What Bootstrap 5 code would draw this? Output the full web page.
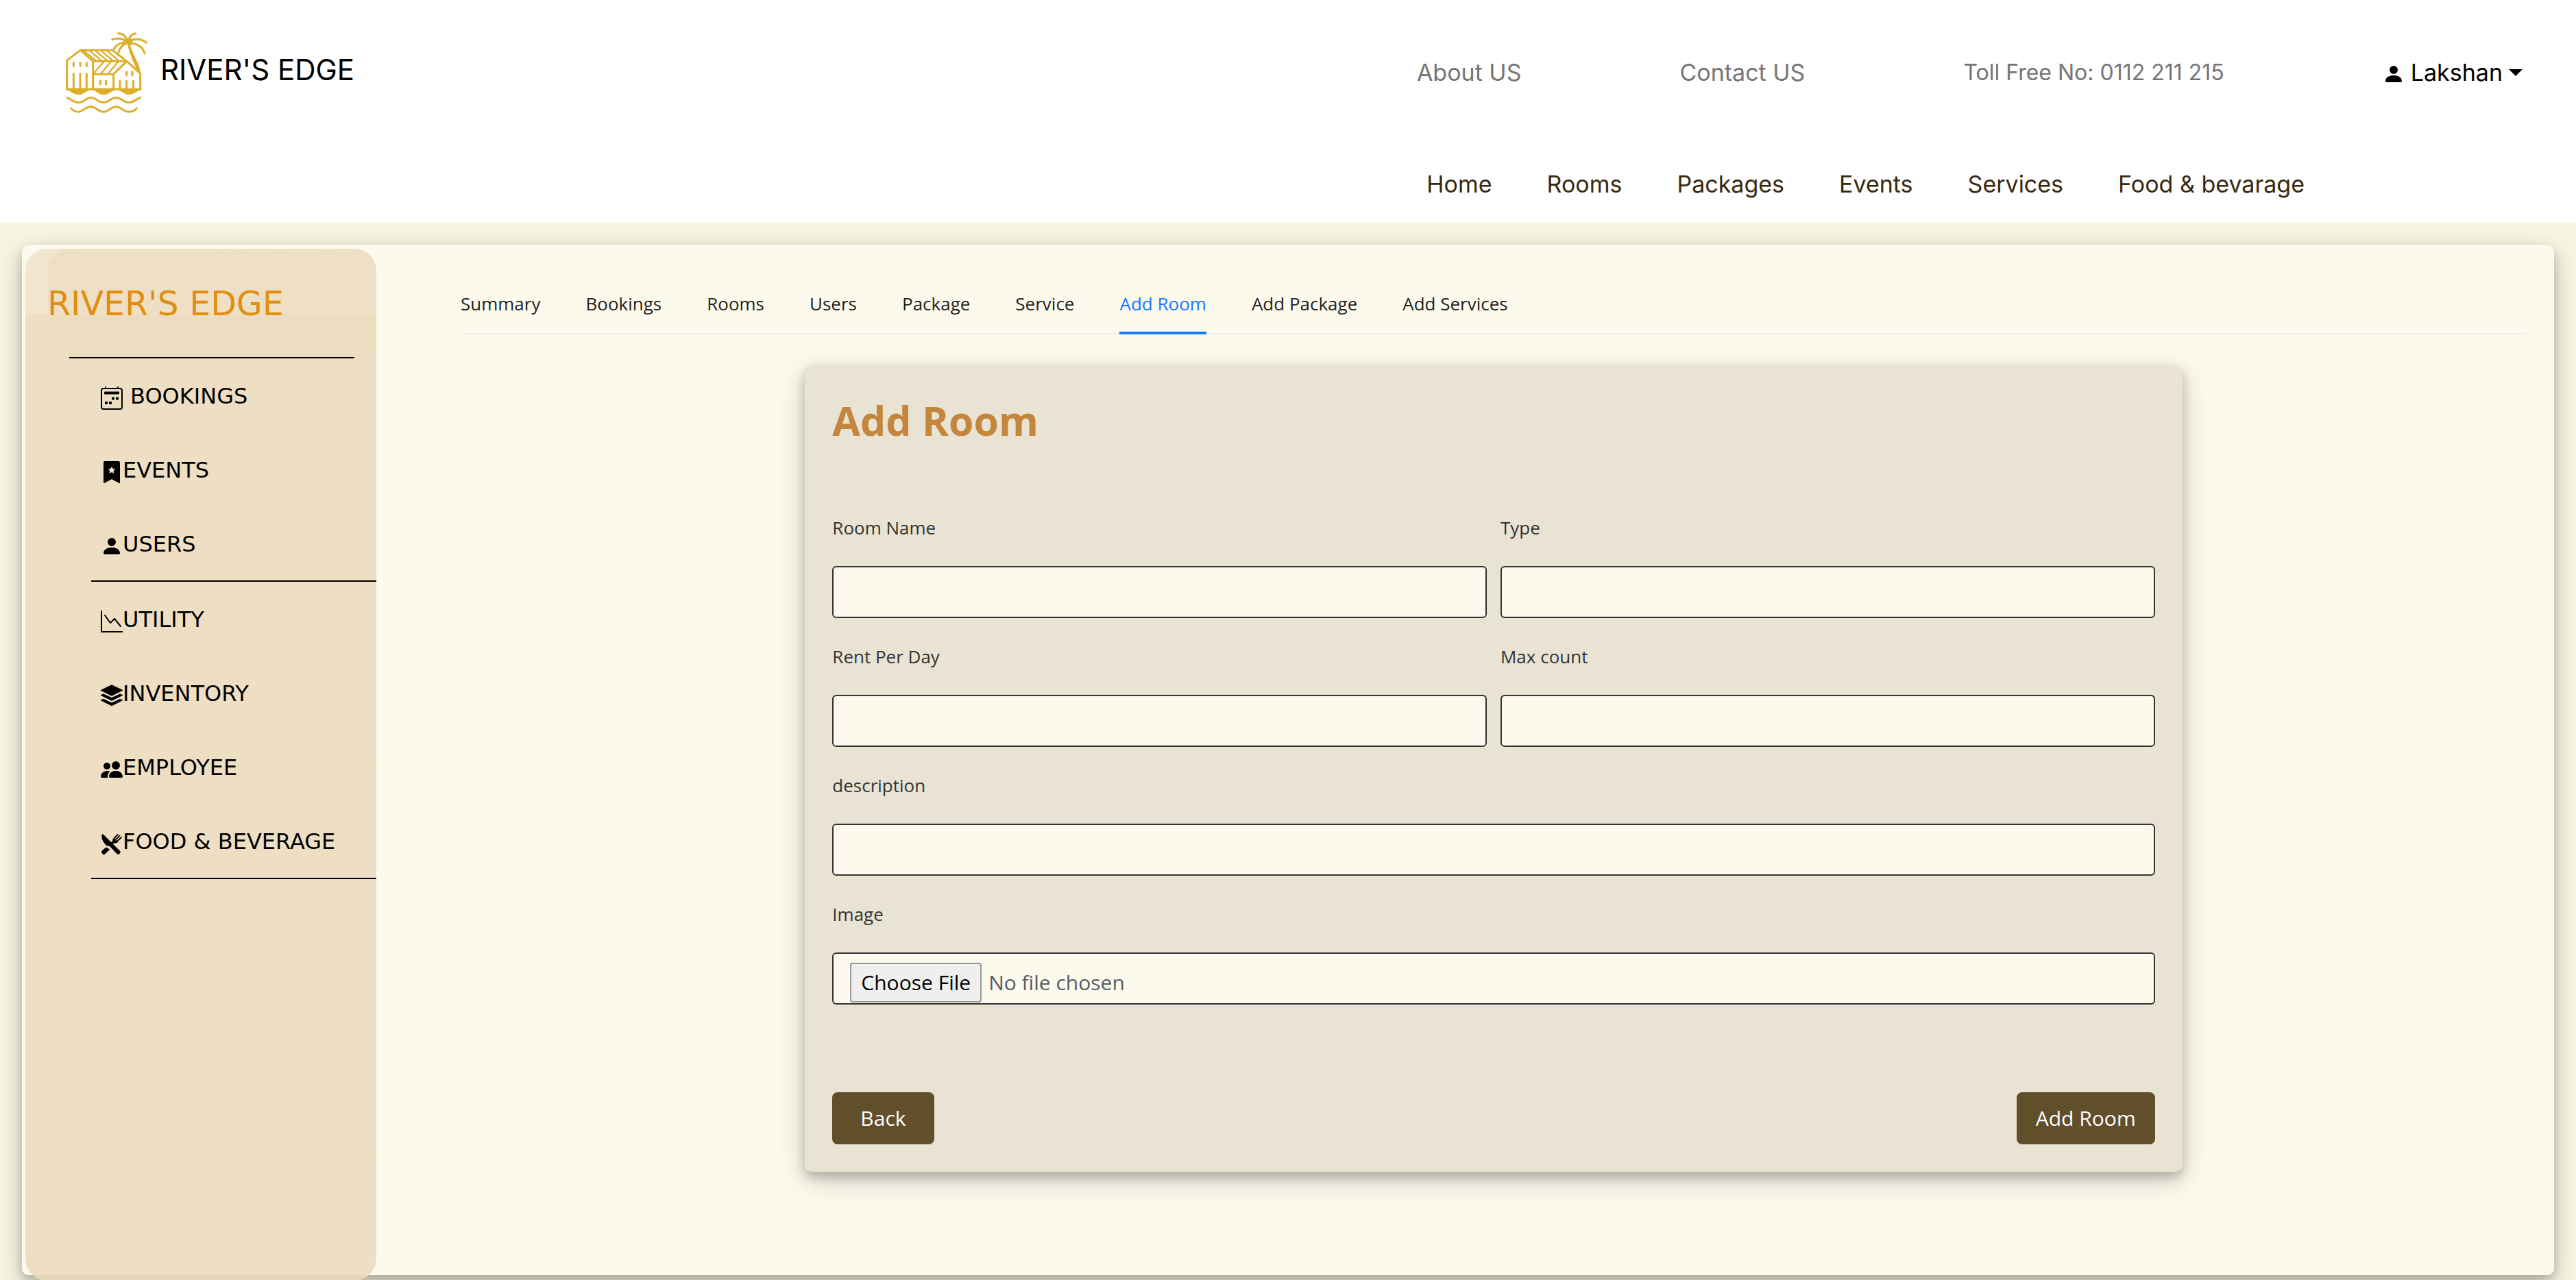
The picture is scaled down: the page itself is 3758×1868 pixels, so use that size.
<!DOCTYPE html>
<html lang="en">
<head>
<meta charset="utf-8">
<meta name="viewport" content="width=device-width, initial-scale=1">
<title>River's Edge - Add Room</title>
<link rel="stylesheet" href="https://cdn.jsdelivr.net/npm/bootstrap@5.3.0/dist/css/bootstrap.min.css">
<style>
  body { background: #f8f5e1; font-family: "Open Sans", "Noto Sans", sans-serif; font-size: 32px; line-height: 48px; color: #212529; min-height: 100vh; overflow: hidden; }
  a { text-decoration: none; }
  .site-header { font-family: "Inter", sans-serif; font-size: 34px; }
  .top-row { height: 212px; padding: 0 78px 0 96px; }
  .menu-row { height: 113px; padding: 0 396px 0 0; gap: 80px; }
  .brand-link { gap: 19px; }
  .brand-name { font-size: 42px; color: #000; padding-bottom: 8px; }
  .top-links { gap: 231px; }
  .top-links a { color: #757575; }
  .top-links .phone { font-size: 32px; }
  .menu-row a { color: #38290f; }
  .user-toggle { font-size: 34px; line-height: 48px; color: #000; gap: 9px; }
  .user-toggle svg { margin-top: 3px; }
  .user-toggle::after { border-width: 10px 10px 0; margin: 0; }
  .workspace { padding: 32px 32px 7px; }
  .panel { background: #fcfaed; border-radius: 10px; padding: 6px 40px 0 5px; gap: 123px; }
  .lifted { box-shadow: 0 8px 16px rgba(0,0,0,.2), 0 12px 40px rgba(0,0,0,.19); }
  .side { width: 512px; margin-bottom: -8px; border-radius: 32px; font-family: "DejaVu Sans", sans-serif;
    background: linear-gradient(rgba(236,219,190,.66) 96px, rgba(236,219,190,.88) 96px); }
  .side-head { margin-left: 32px; height: 160px; border-radius: 32px; background: rgba(236,219,190,.65); padding: 4px 32px 0 0; }
  .side-title { font-size: 49px; line-height: 154px; color: #e18f10; }
  .side-rule { height: 2px; background: #000; margin-left: 32px; }
  .side-list { padding-left: 96px; }
  .side-group { border-bottom: 2px solid #000; }
  .side-link { height: 108px; padding: 2px 0 0 14px; color: #000; font-size: 32px; }
  .side-link svg { margin-top: 6px; }
  .side-link.spaced { gap: 11px; }
  .tab-bar { padding-top: 58px; gap: 66px; border-bottom: 2px solid #f0f0f0; font-size: 26px; line-height: 44px; }
  .tab-bar .nav-link { color: #1f1f1f; padding: 0 0 19px; border-bottom: 4px solid transparent; margin-bottom: -2px; }
  .tab-bar .nav-link.active { color: #1677ff; border-color: #1677ff; }
  .room-card { background: #e9e3d3; border-radius: 10px; margin-top: 45px; padding: 40px; }
  .room-card h1 { font-size: 59px; line-height: 80px; font-weight: 700; color: #c4863c; margin-bottom: 95px; }
  .room-card label { font-size: 26px; line-height: 44px; color: #333; margin-bottom: 34px; }
  .room-card .row { --bs-gutter-x: 20px; }
  .field { margin-bottom: 34px; }
  .room-card .form-control { height: 76px; background: #fcfaed; border: 2px solid #333; border-radius: 6px; font-size: 30px; line-height: 48px; padding: 13px 24px; }
  .room-card .form-control[type=file] { color: #555c66; }
  .room-card .form-control::file-selector-button { margin: 0 10px 0 0; padding: 3px 14px; border: 2px solid #999; border-radius: 4px; background: #efefef; color: #000; }
  .room-card .actions { margin-top: 128px; }
  .btn-brown { height: 76px; background: #614e2a; color: #fff; font-size: 30px; line-height: 48px; border: 0; border-radius: 8px; padding: 0 28px; }
  .btn-back { padding: 0 41px; }
</style>
</head>
<body class="d-flex flex-column">
<header class="site-header bg-white">
  <div class="top-row d-flex align-items-center justify-content-between">
    <a href="#" class="brand-link d-flex align-items-center">
      <svg width="119" height="118" viewBox="108 82 357 353" fill="none" stroke="#dcae2c" stroke-width="9" stroke-linecap="round" stroke-linejoin="round" aria-hidden="true">
        <path d="M113 331V205L172 160H312L373 207L434 262V331M172 160L227 208V331M113 331H434M227 208H373M227 265H317M317 331V265L373 210"/>
        <path stroke-width="7" d="M188 163l50 42M213 163l50 42M238 163l50 42M263 163l50 42M288 163l50 42M273 211l-42 50M305 211l-42 50M337 211l-42 50"/>
        <g stroke-linecap="butt"><path d="M142 212v22M171 212v22M199 212v22M142 261v68M171 261v68M199 261v68M259 291v22M284 291v22M374 252v22M399 252v22M345 292v38M374 292v38M403 292v38"/></g>
        <path fill="#dcae2c" stroke="none" d="M108 328H439V336C420 335 408 355 385 355S350 335 330 335S300 355 273 355S243 335 220 335S190 355 163 355S130 335 108 336Z"/>
        <path d="M114 368C132 373 138 389 163 389S195 368 218 368S249 389 273 389S305 368 328 368S360 389 385 389S415 373 434 368M131 415C139 425 147 430 163 430S195 408 218 408S249 430 273 430S305 408 328 408S360 430 385 430C402 430 411 425 418 415"/>
        <path d="M380 125C372 96 353 87 337 87M380 122C388 98 400 89 412 87M378 122C352 106 326 107 311 114M382 122C408 106 441 111 460 127M376 126C345 126 323 140 317 160M378 128C354 136 342 152 337 176M384 128C417 131 446 143 453 175"/>
        <path fill="#dcae2c" stroke-width="5" d="M360 115L400 112L395 135L368 132ZM380 133C391 184 410 220 418 238L432 252C423 210 397 178 386 133Z"/>
      </svg>
      <span class="brand-name">RIVER'S EDGE</span>
    </a>
    <nav class="top-links d-flex align-items-center">
      <a href="#">About US</a>
      <a href="#">Contact US</a>
      <a href="#" class="phone">Toll Free No: 0112 211 215</a>
      <button type="button" class="user-toggle btn p-0 border-0 d-flex align-items-center dropdown-toggle">
        <svg width="32" height="32" viewBox="0 0 16 16" fill="currentColor" aria-hidden="true"><path d="M3 14s-1 0-1-1 1-4 6-4 6 3 6 4-1 1-1 1H3zm5-6a3 3 0 1 0 0-6 3 3 0 0 0 0 6z"/></svg>
        Lakshan
      </button>
    </nav>
  </div>
  <nav class="menu-row d-flex align-items-center justify-content-end">
    <a href="#">Home</a>
    <a href="#">Rooms</a>
    <a href="#">Packages</a>
    <a href="#">Events</a>
    <a href="#">Services</a>
    <a href="#">Food &amp; bevarage</a>
  </nav>
</header>

<main class="workspace flex-grow-1 d-flex">
  <div class="panel lifted flex-grow-1 d-flex">
    <aside class="side flex-shrink-0">
      <div class="side-head">
        <div class="side-title">RIVER'S EDGE</div>
        <div class="side-rule"></div>
      </div>
      <nav class="side-list">
        <div class="side-group">
          <a href="#" class="side-link spaced d-flex align-items-center">
            <svg width="32" height="34" viewBox="0 0 16 17" fill="currentColor" aria-hidden="true"><path fill-rule="evenodd" d="M3.5 0a.5.5 0 0 1 .5.5V1h8V.5a.5.5 0 0 1 1 0V1h1a2 2 0 0 1 2 2v12a2 2 0 0 1-2 2H2a2 2 0 0 1-2-2V3a2 2 0 0 1 2-2h1V.5a.5.5 0 0 1 .5-.5zM2 2a1 1 0 0 0-1 1v12a1 1 0 0 0 1 1h12a1 1 0 0 0 1-1V3a1 1 0 0 0-1-1z"/><rect x="2.500" y="3.800" width="11" height="2" rx=".5"/><rect x="8" y="7.800" width="2" height="2" rx=".5"/><rect x="11" y="7.800" width="2" height="2" rx=".5"/><rect x="3" y="11" width="2" height="2" rx=".5"/><rect x="6" y="11" width="2" height="2" rx=".5"/></svg>
            BOOKINGS</a>
          <a href="#" class="side-link d-flex align-items-center">
            <svg width="32" height="32" viewBox="0 0 16 16" fill="currentColor" aria-hidden="true"><path fill-rule="evenodd" d="M2 15.500V1a1 1 0 0 1 1-1h10a1 1 0 0 1 1 1v14.500a.5.5 0 0 1-.74.439L8 13.069l-5.260 2.870A.5.5 0 0 1 2 15.500zM8.160 4.100a.178.178 0 0 0-.32 0l-.634 1.285a.178.178 0 0 1-.134.098l-1.420.206a.178.178 0 0 0-.098.303L6.580 6.993c.042.041.061.1.051.158L6.390 8.565a.178.178 0 0 0 .258.187l1.270-.668a.178.178 0 0 1 .165 0l1.270.668a.178.178 0 0 0 .257-.187L9.368 7.150a.178.178 0 0 1 .05-.158l1.028-1.001a.178.178 0 0 0-.098-.303l-1.420-.206a.178.178 0 0 1-.134-.098L8.160 4.100z"/></svg>
            EVENTS</a>
          <a href="#" class="side-link d-flex align-items-center">
            <svg width="32" height="32" viewBox="0 0 16 16" fill="currentColor" aria-hidden="true"><path d="M3 14s-1 0-1-1 1-4 6-4 6 3 6 4-1 1-1 1H3zm5-6a3 3 0 1 0 0-6 3 3 0 0 0 0 6z"/></svg>
            USERS</a>
        </div>
        <div class="side-group">
          <a href="#" class="side-link d-flex align-items-center">
            <svg width="32" height="32" viewBox="0 0 16 16" fill="currentColor" aria-hidden="true"><path d="M0 0h1v15h15v1H0V0zm14.817 11.887a.5.5 0 0 0 .07-.704l-4.500-5.500a.5.5 0 0 0-.74-.037L7.060 8.233 3.404 3.206a.5.5 0 0 0-.808.588l4 5.500a.5.5 0 0 0 .758.060l2.609-2.610 4.150 5.073a.5.5 0 0 0 .704.070Z"/></svg>
            UTILITY</a>
          <a href="#" class="side-link d-flex align-items-center">
            <svg width="32" height="32" viewBox="0 0 16 16" fill="currentColor" aria-hidden="true"><path d="M7.700.3a.8.8 0 0 1 .6 0l7.500 3.600a.3.3 0 0 1 0 .6L8.300 8.200a.8.8 0 0 1-.6 0L.2 4.500a.3.3 0 0 1 0-.6zM.2 7.500l1.700-.8 5.500 2.600a1.400 1.400 0 0 0 1.200 0l5.500-2.600 1.700.8a.3.3 0 0 1 0 .6l-7.500 3.700a.8.8 0 0 1-.6 0L.2 8.100a.3.3 0 0 1 0-.6zM.2 11.200l1.700-.8 5.500 2.600a1.400 1.400 0 0 0 1.200 0l5.500-2.600 1.700.8a.3.3 0 0 1 0 .6l-7.500 3.700a.8.8 0 0 1-.6 0L.2 11.800a.3.3 0 0 1 0-.6z"/></svg>
            INVENTORY</a>
          <a href="#" class="side-link d-flex align-items-center">
            <svg width="32" height="32" viewBox="0 0 16 16" fill="currentColor" aria-hidden="true"><path d="M7 14s-1 0-1-1 1-4 5-4 5 3 5 4-1 1-1 1H7zm4-6a3 3 0 1 0 0-6 3 3 0 0 0 0 6z"/><path d="M5.216 14A2.238 2.238 0 0 1 5 13c0-1.355.68-2.750 1.936-3.720A6.325 6.325 0 0 0 5 9c-4 0-5 3-5 4s1 1 1 1h4.216z"/><path d="M4.500 8a2.500 2.500 0 1 0 0-5 2.500 2.500 0 0 0 0 5z"/></svg>
            EMPLOYEE</a>
          <a href="#" class="side-link d-flex align-items-center">
            <svg width="32" height="32" viewBox="0 0 16 16" fill="currentColor" aria-hidden="true"><path d="M.8 1.500C1 1.100 1.500 1 1.900 1.400L8.500 8l5.300 5.200a1.500 1.500 0 0 1-2.200 2.200L7.500 11 5.900 9.600 4.700 9.900C1.800 7.500.2 4.500.8 1.500zM3.900 10.700l2.700 1.500-3 3.100A1.500 1.500 0 0 1 1 13.100z"/><path fill="none" stroke="currentColor" stroke-linecap="round" stroke-width=".9" d="M12.300 1.400L9.800 4.200M13.800 2.200L11 5M15 3.500L12.300 6"/><path d="M9.500 3.900l3.100 3c-.8.9-1.700 1-2.600.7l-1.400 1-1.300-1.300L8.700 6.100C8.400 5.300 8.800 4.500 9.500 3.900z"/></svg>
            FOOD &amp; BEVERAGE</a>
        </div>
      </nav>
    </aside>

    <section class="flex-grow-1">
      <ul class="nav tab-bar">
        <li class="nav-item"><a class="nav-link" href="#">Summary</a></li>
        <li class="nav-item"><a class="nav-link" href="#">Bookings</a></li>
        <li class="nav-item"><a class="nav-link" href="#">Rooms</a></li>
        <li class="nav-item"><a class="nav-link" href="#">Users</a></li>
        <li class="nav-item"><a class="nav-link" href="#">Package</a></li>
        <li class="nav-item"><a class="nav-link" href="#">Service</a></li>
        <li class="nav-item"><a class="nav-link active" aria-current="page" href="#">Add Room</a></li>
        <li class="nav-item"><a class="nav-link" href="#">Add Package</a></li>
        <li class="nav-item"><a class="nav-link" href="#">Add Services</a></li>
      </ul>
      <form class="room-card lifted col-8 mx-auto">
        <h1>Add Room</h1>
        <div class="row">
          <div class="col-6 field"><label class="d-block" for="roomName">Room Name</label><input id="roomName" type="text" class="form-control"></div>
          <div class="col-6 field"><label class="d-block" for="roomType">Type</label><input id="roomType" type="text" class="form-control"></div>
          <div class="col-6 field"><label class="d-block" for="rent">Rent Per Day</label><input id="rent" type="text" class="form-control"></div>
          <div class="col-6 field"><label class="d-block" for="maxCount">Max count</label><input id="maxCount" type="text" class="form-control"></div>
          <div class="col-12 field"><label class="d-block" for="description">description</label><input id="description" type="text" class="form-control"></div>
          <div class="col-12"><label class="d-block" for="image">Image</label><input id="image" type="file" class="form-control"></div>
        </div>
        <div class="actions d-flex justify-content-between">
          <button type="button" class="btn btn-brown btn-back">Back</button>
          <button type="submit" class="btn btn-brown">Add Room</button>
        </div>
      </form>
    </section>
  </div>
</main>
<script src="https://cdn.jsdelivr.net/npm/bootstrap@5.3.0/dist/js/bootstrap.bundle.min.js"></script>
</body>
</html>
